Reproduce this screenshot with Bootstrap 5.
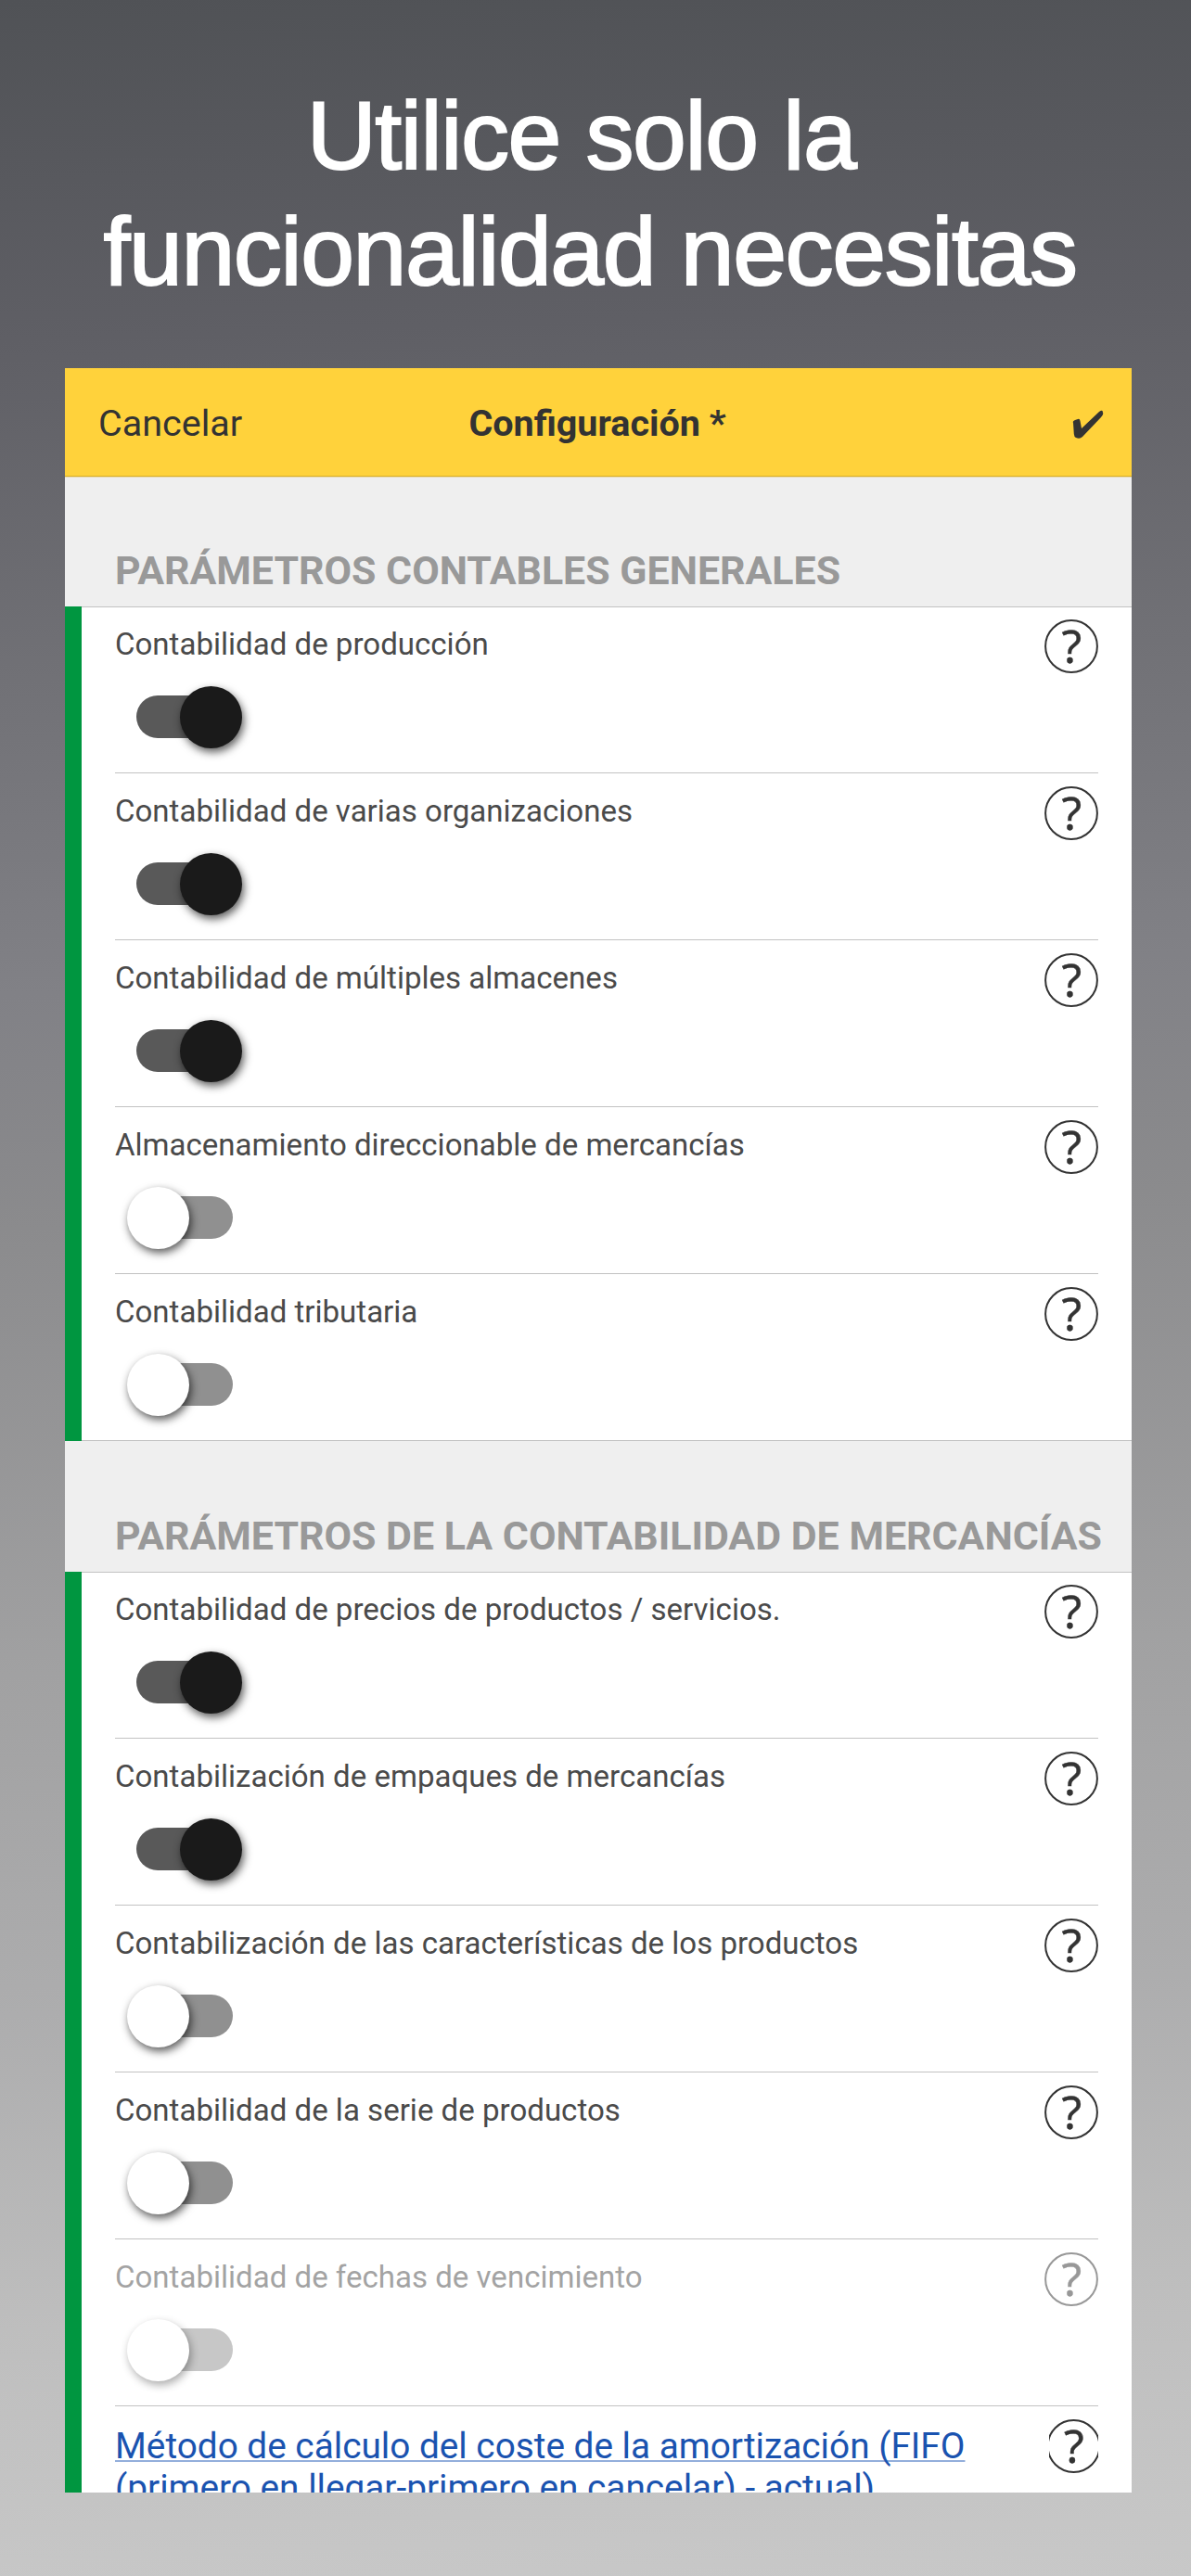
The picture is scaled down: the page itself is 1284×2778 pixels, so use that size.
<!DOCTYPE html>
<html lang="es">
<head>
    <meta charset="UTF-8">
    <meta name="viewport" content="width=device-width, initial-scale=1.0">
    <title>Configuración</title>
    <!-- Bootstrap CSS -->
    <link href="https://cdn.jsdelivr.net/npm/bootstrap@5.3.2/dist/css/bootstrap.min.css" rel="stylesheet">
    <style>
        body {
            height: 2778px;
            overflow: hidden;
            background: linear-gradient(178deg, #505256 0%, #5f5f65 13%, #717176 26%, #818186 38%, #8b8b8d 47%, #a1a1a2 64%, #adadae 77%, #bebebe 89%, #c8c8c8 100%);
            font-family: Roboto, "Liberation Sans", sans-serif;
            color: #333;
        }

        .promo-title {
            height: 397px;
            padding-top: 84px;
            font-family: "Liberation Sans", Arial, sans-serif;
            font-size: 104px;
            line-height: 125px;
            letter-spacing: -1.4px;
            color: #fff;
            -webkit-text-stroke: 2px #fff;
        }

        .promo-title .first-line {
            margin-right: 31px;
        }

        .promo-title .second-line {
            margin-right: 12px;
        }

        .panel {
            width: 1150px;
            height: 2291px;
            margin-left: 70px;
            background-color: #fff;
        }

        .top-bar {
            height: 118px;
            padding: 2px 38px 0 36px;
            background-color: #ffd23b;
            border-bottom: 1px solid #eadcb2;
            box-shadow: inset 0 -1px #d8ae25;
            font-size: 39.5px;
            line-height: 116px;
        }

        .top-bar svg {
            width: 34px;
            height: 32px;
            margin: 2px -8px 0 0;
        }

        .group-title {
            height: 139px;
            padding: 0 0 14px 54px;
            background-color: #efefef;
            color: #999;
            font-size: 42.9px;
            line-height: 50px;
            font-weight: 700;
            white-space: nowrap;
        }

        .group-title.tall {
            height: 141px;
        }

        .group-list {
            border-left: 18px solid #009640;
        }

        .rows {
            border-top: 1px solid #c2c2c2;
            padding: 0 36px;
        }

        .rows-closed {
            border-bottom: 1px solid #c2c2c2;
        }

        .option {
            height: 180px;
            border-bottom: 1px solid #c2c2c2;
            padding-top: 14px;
        }

        .option:first-child {
            height: 179px;
            padding-top: 13px;
        }

        .rows-closed .option:last-child {
            height: 179px;
            border-bottom: 0;
        }

        .option-name {
            padding-top: 8px;
            font-size: 33.05px;
            line-height: 38px;
            color: #4a4a4a;
        }

        .help {
            width: 58px;
            height: 58px;
            flex: none;
        }

        .help-narrow {
            width: 53px;
        }

        .switch {
            width: 104px;
            height: 46px;
            margin: 24px 0 0 23px;
            border-radius: 23px;
            background-color: #909090;
        }

        .switch .knob {
            width: 67px;
            height: 67px;
            flex: none;
            margin-left: -10px;
            border-radius: 50%;
            background-color: #fff;
            box-shadow: 2px 4px 10px rgba(0, 0, 0, .65);
        }

        .switch.on {
            background-color: #595959;
        }

        .switch.on .knob {
            margin: 0 -10px 0 auto;
            background-color: #1a1a1a;
        }

        .inactive .option-name,
        .inactive .help {
            opacity: .5;
        }

        .inactive .switch {
            background-color: #c7c7c7;
        }

        .inactive .knob {
            box-shadow: 2px 4px 10px rgba(0, 0, 0, .33);
        }

        .method {
            padding-top: 6px;
            color: #1a53b0;
            font-size: 38.75px;
            line-height: 45px;
            text-decoration: underline;
            text-decoration-color: #94aedb;
            text-decoration-thickness: 2px;
            text-underline-offset: 2px;
            text-decoration-skip-ink: none;
            white-space: nowrap;
        }
    </style>
</head>
<body>
    <!-- Icono de ayuda -->
    <svg class="d-none">
        <symbol id="help" viewBox="0 0 58 58">
            <circle cx="29" cy="29" r="27.9" fill="none" stroke="#333" stroke-width="2"/>
            <text x="29.3" y="46.500" text-anchor="middle" font-family="Noto Sans, sans-serif" font-size="50" fill="#333" stroke="#333" stroke-width=".4">?</text>
        </symbol>
    </svg>

    <div class="promo-title text-center text-nowrap">
        <div class="first-line">Utilice solo la</div>
        <div class="second-line">funcionalidad necesitas</div>
    </div>

    <main class="panel overflow-hidden">
        <header class="top-bar row g-0 align-items-center">
            <div class="col">Cancelar</div>
            <div class="col-auto fw-bold">Configuración *</div>
            <div class="col d-flex justify-content-end">
                <svg viewBox="0 0 34 32"><path d="M1 14Q0 12 3 11L6 10Q8 9 8.5 12L10 20L29 2Q33-1 33 3Q34 5 31 8L11 29Q8 32 4 30Q2 29 1.800 26Z" fill="#333"/></svg>
            </div>
        </header>

        <!-- Parámetros generales -->
        <section>
            <div class="group-title d-flex align-items-end">PARÁMETROS CONTABLES GENERALES</div>
            <div class="group-list">
                <div class="rows rows-closed">
                    <div class="option">
                        <div class="d-flex justify-content-between">
                            <div class="option-name">Contabilidad de producción</div>
                            <svg class="help"><use href="#help"/></svg>
                        </div>
                        <div class="switch on d-flex align-items-center"><div class="knob"></div></div>
                    </div>
                    <div class="option">
                        <div class="d-flex justify-content-between">
                            <div class="option-name">Contabilidad de varias organizaciones</div>
                            <svg class="help"><use href="#help"/></svg>
                        </div>
                        <div class="switch on d-flex align-items-center"><div class="knob"></div></div>
                    </div>
                    <div class="option">
                        <div class="d-flex justify-content-between">
                            <div class="option-name">Contabilidad de múltiples almacenes</div>
                            <svg class="help"><use href="#help"/></svg>
                        </div>
                        <div class="switch on d-flex align-items-center"><div class="knob"></div></div>
                    </div>
                    <div class="option">
                        <div class="d-flex justify-content-between">
                            <div class="option-name">Almacenamiento direccionable de mercancías</div>
                            <svg class="help"><use href="#help"/></svg>
                        </div>
                        <div class="switch d-flex align-items-center"><div class="knob"></div></div>
                    </div>
                    <div class="option">
                        <div class="d-flex justify-content-between">
                            <div class="option-name">Contabilidad tributaria</div>
                            <svg class="help"><use href="#help"/></svg>
                        </div>
                        <div class="switch d-flex align-items-center"><div class="knob"></div></div>
                    </div>
                </div>
            </div>
        </section>

        <!-- Parámetros de mercancías -->
        <section>
            <div class="group-title tall d-flex align-items-end">PARÁMETROS DE LA CONTABILIDAD DE MERCANCÍAS</div>
            <div class="group-list">
                <div class="rows">
                    <div class="option">
                        <div class="d-flex justify-content-between">
                            <div class="option-name">Contabilidad de precios de productos / servicios.</div>
                            <svg class="help"><use href="#help"/></svg>
                        </div>
                        <div class="switch on d-flex align-items-center"><div class="knob"></div></div>
                    </div>
                    <div class="option">
                        <div class="d-flex justify-content-between">
                            <div class="option-name">Contabilización de empaques de mercancías</div>
                            <svg class="help"><use href="#help"/></svg>
                        </div>
                        <div class="switch on d-flex align-items-center"><div class="knob"></div></div>
                    </div>
                    <div class="option">
                        <div class="d-flex justify-content-between">
                            <div class="option-name">Contabilización de las características de los productos</div>
                            <svg class="help"><use href="#help"/></svg>
                        </div>
                        <div class="switch d-flex align-items-center"><div class="knob"></div></div>
                    </div>
                    <div class="option">
                        <div class="d-flex justify-content-between">
                            <div class="option-name">Contabilidad de la serie de productos</div>
                            <svg class="help"><use href="#help"/></svg>
                        </div>
                        <div class="switch d-flex align-items-center"><div class="knob"></div></div>
                    </div>
                    <div class="option inactive">
                        <div class="d-flex justify-content-between">
                            <div class="option-name">Contabilidad de fechas de vencimiento</div>
                            <svg class="help"><use href="#help"/></svg>
                        </div>
                        <div class="switch d-flex align-items-center"><div class="knob"></div></div>
                    </div>
                    <div class="option">
                        <div class="d-flex justify-content-between">
                            <a class="method" href="#">Método de cálculo del coste de la amortización (FIFO<br>(primero en llegar-primero en cancelar) - actual)</a>
                            <svg class="help help-narrow" viewBox="2.5 0 53 58"><use href="#help" width="58" height="58"/></svg>
                        </div>
                    </div>
                </div>
            </div>
        </section>
    </main>

    <!-- Bootstrap JS -->
    <script src="https://cdn.jsdelivr.net/npm/bootstrap@5.3.2/dist/js/bootstrap.bundle.min.js"></script>
</body>
</html>
